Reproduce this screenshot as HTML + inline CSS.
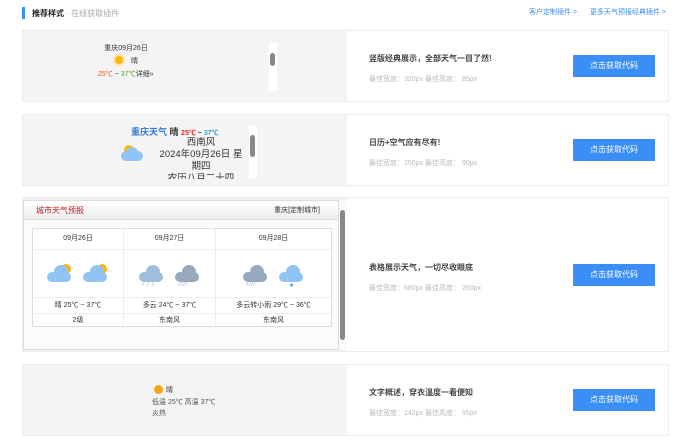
<html><head><style>
body{margin:0;width:700px;height:446px;background:#fff;font-family:"Liberation Sans","Noto Sans CJK SC",sans-serif;position:relative;overflow:hidden}
.a{position:absolute}
.card{position:absolute;left:22px;width:647px;border:1px solid #ececec;box-sizing:border-box;background:#fff}
.g{position:absolute;left:0;top:0;bottom:0;width:324px;background:#f4f4f4}
.t{position:absolute;left:346px;font-size:8px;color:#444;font-weight:bold}
.s{position:absolute;left:346px;font-size:7px;color:#bbb}
.btn{position:absolute;left:550px;width:82px;height:22px;background:#3a8ef6;color:#fff;font-size:8px;text-align:center;line-height:22px}
.sb{position:absolute;width:8px;background:#fafafa}
.sb i{position:absolute;left:1px;width:5px;background:#888;border-radius:3px}
.c{font-size:7px;color:#333;text-align:center}
.hd{height:20px;line-height:20px;border-bottom:1px solid #eee}
.im{height:47px;padding-top:12px;box-sizing:border-box}
.tp{height:15px;border-top:1px solid #eee;line-height:15px}
.wd{border-top:1px solid #eee;line-height:13px}
.ic{position:relative;display:inline-block;width:26px;height:24px;margin:0 5px;vertical-align:middle}
.ic .sun{position:absolute;right:2px;top:2px;width:10px;height:10px;border-radius:50%;background:#f9b51a}
.ic .b{position:absolute;left:0;top:10px;width:24px;height:10px;border-radius:5px}
.ic .p{position:absolute;left:7px;top:3px;width:14px;height:14px;border-radius:50%}
.ic .r{position:absolute;left:4px;top:21px;font-size:5px;letter-spacing:1px;color:#6a8fb5;line-height:5px}
.l .b,.l .p{background:#8fc4f5}.m .b,.m .p{background:#9dbedd}.d .b,.d .p{background:#96a9bd}
</style></head><body>
<div class="a" style="left:22px;top:7px;width:3px;height:12px;background:#3a8ef6"></div>
<div class="a" style="left:32px;top:8px;font-size:8px;font-weight:bold;color:#222">推荐样式<span style="font-weight:normal;color:#aaa"> · 在线获取插件</span></div>
<div class="a" style="left:529px;top:7px;font-size:7px;color:#3a8ef6">客户定制插件 &gt;</div>
<div class="a" style="left:590px;top:7px;font-size:7px;color:#3a8ef6">更多天气预报经典插件 &gt;</div>

<div class="card" style="top:30px;height:72px"><div class="g">
<div class="a c" style="left:60px;top:12px;width:86px">重庆09月26日</div>
<div class="a" style="left:92px;top:25px;width:8px;height:8px;border-radius:50%;background:#fbb814;box-shadow:0 0 0 2px #fde2a0"></div>
<div class="a c" style="left:108px;top:25px">晴</div>
<div class="a" style="left:75px;top:38px;font-size:7px;color:#333"><span style="color:#e9522b">25℃</span> ~ <span style="color:#4cab2a">37℃</span>详细»</div>
<div class="sb" style="left:246px;top:12px;height:48px;background:#fff"><i style="top:10px;height:13px"></i></div>
</div>
<div class="t" style="top:22px">竖版经典展示，全部天气一目了然!</div>
<div class="s" style="top:43px">最佳宽度：320px 最佳高度： 85px</div>
<div class="btn" style="top:24px">点击获取代码</div></div>

<div class="card" style="top:114px;height:72px"><div class="g">
<div class="a" style="left:108px;top:10px;font-size:9px;color:#3a7fd6;font-weight:bold">重庆天气 <span style="color:#333">晴</span> <span style="color:#e22;font-size:7px">25℃</span><span style="font-size:7px;color:#333"> ~ </span><span style="color:#3a9ad6;font-size:7px">37℃</span></div>
<div class="a" style="left:101px;top:30px;width:10px;height:10px;border-radius:50%;background:#fbb814"></div>
<div class="a" style="left:98px;top:36px;width:22px;height:10px;border-radius:5px;background:#8fc4f5"></div>
<div class="a" style="left:103px;top:32px;width:12px;height:12px;border-radius:50%;background:#8fc4f5"></div>
<div class="a" style="left:128px;top:22px;width:100px;height:42px;overflow:hidden;font-size:9.5px;color:#333;text-align:center;line-height:12px">西南风<br>2024年09月26日 星<br>期四<br>农历八月二十四</div>
<div class="sb" style="left:226px;top:10px;height:54px;background:#fff"><i style="top:10px;height:22px"></i></div>
</div>
<div class="t" style="top:22px">日历+空气应有尽有!</div>
<div class="s" style="top:43px">最佳宽度：250px 最佳高度： 90px</div>
<div class="btn" style="top:24px">点击获取代码</div></div>

<div class="card" style="top:197px;height:155px"><div class="g">
<div class="a" style="left:0;top:2px;width:316px;height:150px;background:#fbfbfb;border:1px solid #ddd;box-sizing:border-box">
<div style="height:18px;background:linear-gradient(#fff,#eee);border-bottom:1px solid #ddd;position:relative">
<span class="a" style="left:12px;top:4px;font-size:8px;color:#b22">城市天气预报</span>
<span class="a" style="right:18px;top:4px;font-size:7px;color:#333">重庆[定制城市]</span></div>
<div class="a" style="left:8px;top:27px;width:298px;height:97px;border:1px solid #ddd;background:#fff">
<div style="display:flex;height:100%">
<div style="width:90px;border-right:1px solid #eee" class="c"><div class="hd">09月26日</div><div class="im"><span class="ic l"><i class="sun"></i><i class="p"></i><i class="b"></i></span><span class="ic l"><i class="sun"></i><i class="p"></i><i class="b"></i></span></div><div class="tp">晴 25℃ ~ 37℃</div><div class="wd">2级</div></div>
<div style="width:91px;border-right:1px solid #eee" class="c"><div class="hd">09月27日</div><div class="im"><span class="ic m"><i class="p"></i><i class="b"></i><i class="r">/ / /</i></span><span class="ic d"><i class="p"></i><i class="b"></i><i class="r">////</i></span></div><div class="tp">多云 24℃ ~ 37℃</div><div class="wd">东南风</div></div>
<div style="flex:1" class="c"><div class="hd">09月28日</div><div class="im"><span class="ic d"><i class="p"></i><i class="b"></i><i class="r">////</i></span><span class="ic l"><i class="p"></i><i class="b"></i><i class="r" style="left:11px;color:#5a9ee0;font-size:7px">●</i></span></div><div class="tp">多云转小雨 29℃ ~ 36℃</div><div class="wd">东南风</div></div>
</div></div></div>
<div class="sb" style="left:316px;top:2px;height:150px"><i style="top:10px;height:130px"></i></div>
</div>
<div class="t" style="top:64px">表格展示天气，一切尽收眼底</div>
<div class="s" style="top:85px">最佳宽度：680px 最佳高度： 260px</div>
<div class="btn" style="top:66px">点击获取代码</div></div>

<div class="card" style="top:364px;height:72px"><div class="g">
<div class="a" style="left:131px;top:20px;width:9px;height:9px;border-radius:50%;background:#f9a51a"></div>
<div class="a" style="left:143px;top:20px;font-size:7px;color:#333">晴</div>
<div class="a" style="left:129px;top:32px;font-size:7px;color:#555;line-height:11px">低温 25℃ 高温 37℃<br>炎热</div>
</div>
<div class="t" style="top:22px">文字概述，穿衣温度一看便知</div>
<div class="s" style="top:43px">最佳宽度：242px 最佳高度： 95px</div>
<div class="btn" style="top:24px">点击获取代码</div></div>
</body></html>
